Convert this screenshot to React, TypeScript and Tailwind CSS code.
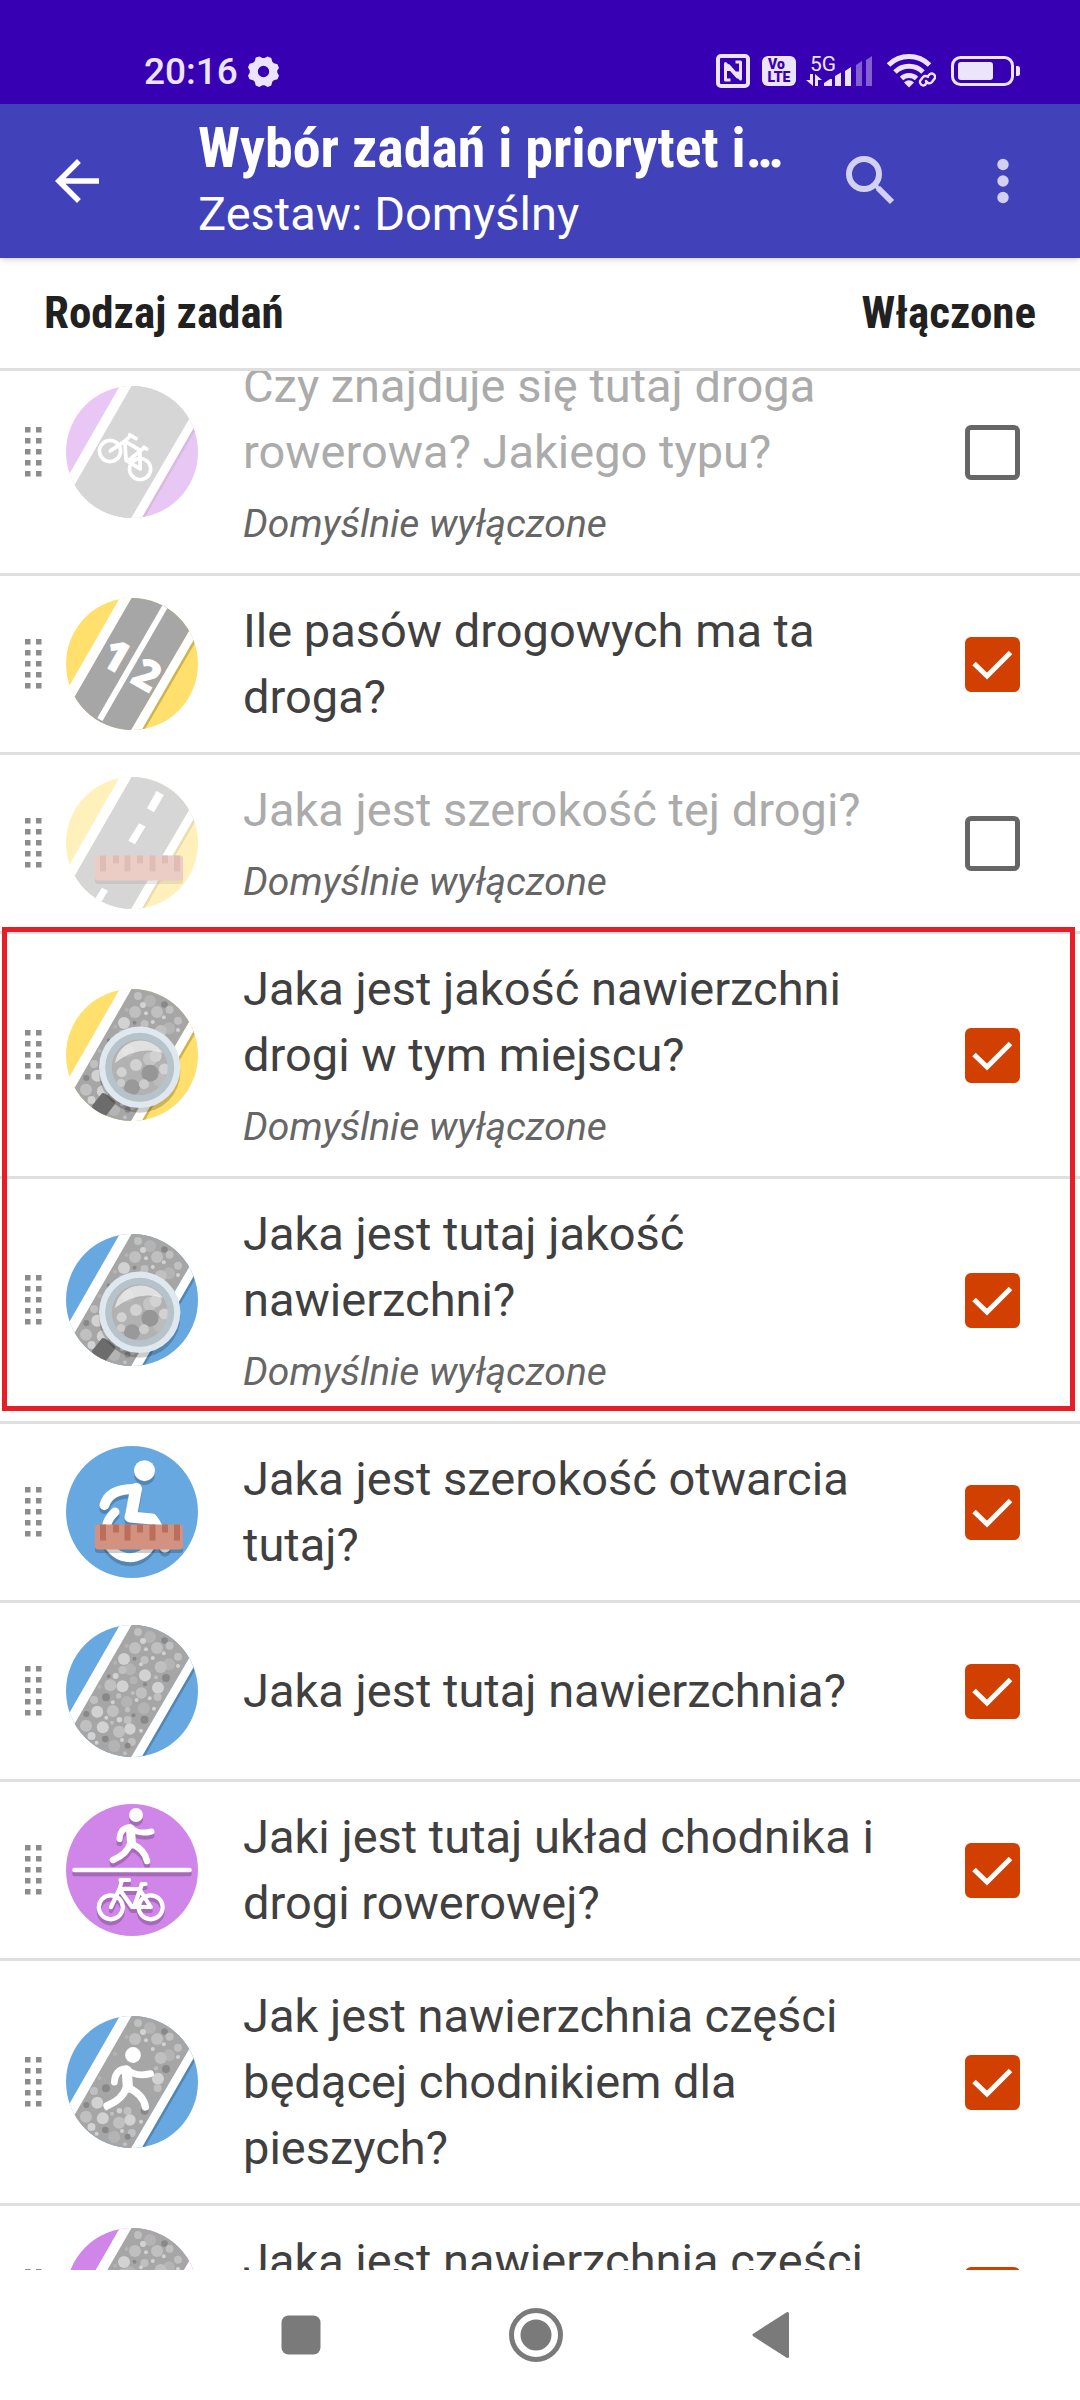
import React, { useId, useState } from "react";

const YELLOW = "#ffe06d";
const BLUE = "#68a8e0";
const PURPLE = "#d085e8";

const L = "#d2d2d2";
const M = "#c0c0c0";
const S = "#b4b4b4";
const D = "#888888";

type Dot = [number, number, number, string];

const PEBBLES: Dot[] = [
  [72, 7, 4, M], [84, 12, 6, S], [77, 16, 3, L], [98.5, 15.5, 3.3, D], [69, 23, 6, M], [60.6, 21, 2, S],
  [91, 23, 6, M], [103.6, 20.7, 4, M], [80, 24.3, 2, L], [97.8, 28.3, 2, L], [112, 31.7, 4, M], [86.8, 33, 2, L],
  [58, 34, 6, L], [68.5, 33.7, 2, D], [78.5, 35, 4, M], [75, 39.3, 2, L], [49, 37.7, 2, S], [103, 39.3, 6, S],
  [94.7, 42, 6, M], [112, 41, 2, L], [64, 44.3, 6, S], [56.5, 45, 4, M], [79, 50.3, 6, L], [49.6, 51, 3, L],
  [42.7, 51.3, 2, D], [100, 53, 4, D], [90, 52.3, 2, M], [67.5, 55.3, 4, S], [79, 59.3, 2, D], [44.4, 60.3, 6, M],
  [56.5, 61.3, 6, L], [33.5, 62, 2, S], [92, 62.7, 6, L], [75.4, 68, 5.7, M], [66.8, 68, 2, M], [91.6, 72, 4, M],
  [40, 72.3, 4, D], [52.7, 71, 2.7, M], [28, 75, 4, M], [46.8, 77.3, 2, L], [70.6, 75, 2, L], [83.7, 73.3, 2, L],
  [60.6, 76.7, 5.7, S], [77.8, 83.3, 6, S], [88, 83.7, 2, L], [31.3, 86.7, 6, L], [46.8, 86, 6, M], [61.6, 84.7, 2.7, M],
  [20.3, 89, 3, D], [40.3, 92.7, 2, L], [53.4, 94.7, 2.7, L], [67.5, 90.3, 2, D], [61.6, 95, 4, M], [78.5, 94.7, 4, D],
  [36.8, 102.3, 6, L], [20, 100.7, 6, M], [46, 97.7, 2, M], [53, 106.7, 6, M], [64, 104, 5.7, L], [75, 105.7, 2, L],
  [25.5, 111, 4, L], [39.3, 114, 3.3, D], [30.6, 117.7, 2, L], [48.2, 121, 6, S], [56, 115, 2, L], [65.8, 117, 4, M],
  [61.6, 120.7, 3, D], [59, 128.3, 2, M],
];

const LENS: Dot[] = [
  [84, 70, 7, "#c4c4c4"], [94, 91, 7, "#bcbcbc"], [62, 62, 6, "#bcbcbc"], [70, 76, 6, L], [84, 84.3, 8.5, "#969696"],
  [66, 98.3, 8, "#999999"], [78, 95.3, 5, "#cccccc"], [55.7, 83.3, 5, L], [89.7, 67, 6, L], [98.5, 80, 5.5, L], [55, 94, 4, "#cccccc"],
];

function Pebbles({ clearing = false }: { clearing?: boolean }) {
  const dots = clearing
    ? PEBBLES.filter(([x, y]) => !(x > 42 && x < 90 && y > 38 && y < 92) && !(x > 55 && x < 80 && y > 28 && y < 50))
    : PEBBLES;
  return (
    <g>
      {dots.map(([cx, cy, r, fill], i) => (
        <circle key={i} cx={cx} cy={cy} r={r} fill={fill} />
      ))}
    </g>
  );
}

function Disc({ color, road = false, faded = false, children }: { color: string; road?: boolean; faded?: boolean; children?: React.ReactNode }) {
  const id = useId();
  return (
    <svg viewBox="0 0 132 132" className={faded ? "size-[132px] shrink-0 opacity-45" : "size-[132px] shrink-0"} aria-hidden="true">
      <clipPath id={id}>
        <circle cx="66" cy="66" r="66" />
      </clipPath>
      <g clipPath={`url(#${id})`}>
        <rect width="132" height="132" fill={color} />
        {road && (
          <>
            <path d="M142 5L155 0L78.500 132H66z" fill="#000" opacity=".2" />
            <path d="M65 0H142.500L65.200 132H-11z" fill="#a6a6a6" />
            <path d="M53.800 0H65.500L-10.500 132H-22z M142.500 0H152L75.700 132H65.200z" fill="#fff" />
          </>
        )}
        {children}
      </g>
    </svg>
  );
}

const bikePath =
  "M54.500 76H63M56 76L53.500 85L45 103M54 85H74M54 86L66 103H84.700M75.500 80H79.500M76 80L68 103M74 86L84.700 103";

function Bike() {
  return (
    <g fill="none" stroke="currentColor" strokeWidth="4.200" strokeLinecap="round" strokeLinejoin="round">
      <circle cx="44.800" cy="103.300" r="12" />
      <circle cx="84.700" cy="103.300" r="12" />
      <path d={bikePath} />
    </g>
  );
}

function Walker() {
  return (
    <g fill="none" stroke="currentColor" strokeLinecap="round" strokeLinejoin="round">
      <circle cx="70" cy="11" r="7" fill="currentColor" stroke="none" />
      <path d="M53.500 35Q54 24 64 23Q72 31 85.500 27.500" strokeWidth="6" />
      <path d="M64.500 25L65.500 40" strokeWidth="9" />
      <path d="M64 40Q61 50 47 56M66 40Q79 46 81 57" strokeWidth="6.500" />
    </g>
  );
}

function Ruler() {
  return (
    <g>
      <rect x="29" y="82" width="88" height="25" rx="3" fill="#000" opacity=".2" />
      <rect x="29" y="78.500" width="88" height="25" rx="3" fill="#d3917f" />
      <path d="M34 78.500h6v16h-6zM47 78.500h6v8h-6zM58.500 78.500h6v16h-6zM71 78.500h6v8h-6zM83.500 78.500h6v16h-6zM96 78.500h6v8h-6zM108 78.500h6v16h-6z" fill="#b96f5b" />
    </g>
  );
}

function Magnifier() {
  return (
    <g>
      <rect x="29" y="106" width="17" height="20" rx="3" transform="rotate(38 37.500 116)" fill="#6c6c6c" />
      <circle cx="73.700" cy="83" r="40.700" fill="#000" opacity=".2" />
      <circle cx="73.700" cy="78.300" r="40.700" fill="#dfe8ee" />
      <circle cx="73.700" cy="78.300" r="34.500" fill="#b7c3ca" />
      <circle cx="73.700" cy="78.300" r="28" fill="#b2b2b2" />
      {LENS.map(([cx, cy, r, fill], i) => (
        <circle key={i} cx={cx} cy={cy} r={r} fill={fill} />
      ))}
      <circle cx="73.700" cy="78.300" r="31" fill="none" stroke="#b7c3ca" strokeWidth="6" />
      <path d="M49 74A26 26 0 0 1 97 64Q72 56 49 74z" fill="#fff" opacity=".6" />
    </g>
  );
}

function WheelchairFigure() {
  return (
    <g fill="none" stroke="currentColor" strokeLinecap="round" strokeLinejoin="round">
      <circle cx="78.500" cy="24.700" r="10.500" fill="currentColor" stroke="none" />
      <path d="M38.500 59Q43 43 68 43" strokeWidth="10" />
      <path d="M70 43L65 70" strokeWidth="12" />
      <path d="M64 71L86 73Q92 80 99 101" strokeWidth="11" />
      <path d="M49 66Q38 76 40 90A24 24 0 0 0 86 97" strokeWidth="9" />
    </g>
  );
}

function Raised({ by = 4, children }: { by?: number; children: React.ReactNode }) {
  return (
    <>
      <g transform={`translate(0 ${by})`} className="text-black" opacity=".2">{children}</g>
      <g className="text-white">{children}</g>
    </>
  );
}

function DragHandle() {
  return (
    <svg viewBox="0 0 17 50" className="h-[50px] w-[17px] shrink-0" fill="#8c8c8c" aria-hidden="true">
      {[0, 11, 22, 33, 44].map((y) => (
        <g key={y}>
          <rect x="0" y={y} width="5.500" height="5.500" />
          <rect x="11" y={y} width="5.500" height="5.500" />
        </g>
      ))}
    </svg>
  );
}

function QuestRow({ icon, title, off = false, on = false }: { icon: React.ReactNode; title: string; off?: boolean; on?: boolean }) {
  const id = useId();
  const [checked, setChecked] = useState(on);
  return (
    <li className="flex shrink-0 items-center border-b-3 border-[#dfdfdf] py-[22px] pr-[60px] pl-[25px]">
      <DragHandle />
      <div className="ml-6 shrink-0">{icon}</div>
      <div className="ml-[45px] min-w-0 flex-1">
        <label htmlFor={id} className={checked ? "block text-[47px] leading-[66px] text-[#404040]" : "block text-[47px] leading-[66px] text-[#ababab]"}>
          {title}
        </label>
        {off && <p className="pt-3 text-[39px] leading-[54px] text-[#666666] italic">Domyślnie wyłączone</p>}
      </div>
      <span className="ml-[60px] grid size-[55px] shrink-0">
        <input
          id={id}
          type="checkbox"
          checked={checked}
          onChange={(e) => setChecked(e.target.checked)}
          className="peer col-start-1 row-start-1 size-[55px] appearance-none rounded-md border-5 border-[#666666] bg-white checked:border-[#d14000] checked:bg-[#d14000]"
        />
        <svg viewBox="0 0 55 55" className="pointer-events-none col-start-1 row-start-1 hidden size-[55px] peer-checked:block" fill="none" stroke="#fff" strokeWidth="5" aria-hidden="true">
          <path d="M9 26.500L22 39L45.500 15.500" />
        </svg>
      </span>
    </li>
  );
}

function StatusBar() {
  return (
    <div className="flex h-[104px] shrink-0 items-center bg-[#3800b3] pt-[38px] pr-[59px] pl-[144px] text-[#ece4fb]">
      <span className="text-[37px] leading-none font-medium">20:16</span>
      <svg viewBox="0 0 30 30" className="ml-2.5 size-[31px]" fill="currentColor" aria-hidden="true">
        <path
          fillRule="evenodd"
          d="M11 0.500L14 2h2L19 0.500L22.500 2L23.500 5.500L25 7L28.500 8L30 11.500L28.300 14v2L30 19L28.500 22.500L25 23.500L23.500 25L22.500 28.500L19 30L16 28.300H14L11 30L7.500 28.500L6.500 25L5 23.500L1.500 22.500L0 19L1.700 16V14L0 11L1.500 7.500L5 6.500L6.500 5L7.500 1.500zM15 9.500A5.500 5.500 0 1 0 15 20.500A5.500 5.500 0 1 0 15 9.500z"
        />
      </svg>
      <div className="ml-auto flex items-center">
        <svg viewBox="0 0 34 34" className="size-[34px]" fill="none" stroke="currentColor" aria-hidden="true">
          <rect x="2" y="2" width="30" height="30" rx="3" strokeWidth="4" />
          <path d="M14.500 26H9.500V9.500L21.500 23V17.500M19.500 8h5V25L12.500 11.500V17" strokeWidth="3" strokeLinejoin="round" />
        </svg>
        <div className="ml-3 flex h-[30px] w-[34px] flex-col items-center justify-center rounded-md bg-[#ece4fb] text-[14px] leading-[13px] font-black text-[#3800b3]">
          <span className="self-start pl-1.5">Vo</span>
          <span>LTE</span>
        </div>
        <div className="ml-2.5 flex w-4 flex-col">
          <span className="pl-1 text-[21px] leading-[18px] whitespace-nowrap">5G</span>
          <svg viewBox="0 0 16 14" className="h-3.5 w-4" fill="currentColor" aria-hidden="true">
            <path d="M4 1h3v12L0 7h4zM9 1l7 6h-4v6H9z" />
          </svg>
        </div>
        <svg viewBox="0 0 50 32" className="ml-0.5 h-8 w-[50px]" fill="currentColor" aria-hidden="true">
          <path d="M0 31V28L6 24H8V31zM11 31V21L17 17.500V31zM21 31V16L27 12V31z" />
          <path d="M32 31V10L38 6V31zM42 31V5L48 1V31z" opacity=".42" />
        </svg>
        <svg viewBox="0 0 50 36" className="ml-3 h-9 w-[50px]" fill="none" stroke="currentColor" aria-hidden="true">
          <path d="M2.500 12A29 29 0 0 1 43.500 12" strokeWidth="5" />
          <path d="M9 19A20 20 0 0 1 37 19" strokeWidth="5" />
          <path d="M15.500 25.500A11 11 0 0 1 30.500 25.500" strokeWidth="5" />
          <path d="M18 29.500Q23 25 28 29.500L23 34.500z" fill="currentColor" stroke="none" />
          <g strokeWidth="2.400" strokeLinecap="round">
            <path d="M41 29l-2 3a3.500 3.500 0 0 1-5-4l3-4a3.500 3.500 0 0 1 5 0" />
            <path d="M42 23l2-2a3.500 3.500 0 0 1 5 4l-3 4a3.500 3.500 0 0 1-6-1" />
          </g>
        </svg>
        <svg viewBox="0 0 70 30" className="ml-[15px] h-[30px] w-[70px]" fill="currentColor" aria-hidden="true">
          <rect x="1.500" y="1.500" width="60" height="27" rx="8" fill="none" stroke="currentColor" strokeWidth="3" />
          <rect x="7" y="6" width="35" height="18" rx="3" />
          <path d="M65 10h1.500q2.500 0 2.500 2.500v5q0 2.500-2.500 2.500H65z" />
        </svg>
      </div>
    </div>
  );
}

export default function App() {
  return (
    <div className="flex h-screen flex-col overflow-hidden bg-white font-['Roboto',sans-serif]">
      <StatusBar />
      <header className="relative z-10 flex shrink-0 items-center bg-[#4141b9] py-[11px] pr-11 pl-11 text-white shadow-md">
        <button type="button" aria-label="Wstecz" className="size-[66px] shrink-0">
          <svg viewBox="0 0 24 24" className="size-[66px]" fill="currentColor" aria-hidden="true">
            <path d="M20 11H7.830l5.590-5.590L12 4l-8 8 8 8 1.410-1.410L7.830 13H20z" />
          </svg>
        </button>
        <div className="ml-[88px] w-[600px] min-w-0 shrink">
          <h1 className="truncate font-['Roboto_Condensed','Liberation_Sans_Narrow',Roboto,sans-serif] text-[56px] leading-[66px] font-bold">
            Wybór zadań i priorytet ich wyświetlania
          </h1>
          <p className="text-[47px] leading-[66px]">Zestaw: Domyślny</p>
        </div>
        <button type="button" aria-label="Szukaj" className="ml-auto size-[66px] shrink-0">
          <svg viewBox="0 0 66 66" className="size-[66px]" fill="none" stroke="#d2d0f3" strokeWidth="6" aria-hidden="true">
            <circle cx="27" cy="26" r="15" />
            <path d="M38.500 37.500L42 41" strokeWidth="4" />
            <path d="M41 40L55 54" />
          </svg>
        </button>
        <button type="button" aria-label="Więcej opcji" className="ml-[67px] size-[66px] shrink-0">
          <svg viewBox="0 0 66 66" className="size-[66px]" fill="#d2d0f3" aria-hidden="true">
            <circle cx="33" cy="16.500" r="5.700" />
            <circle cx="33" cy="33" r="5.700" />
            <circle cx="33" cy="49.500" r="5.700" />
          </svg>
        </button>
      </header>

      <div className="flex shrink-0 items-center justify-between border-b-3 border-[#dfdfdf] px-11 py-[22px] font-['Roboto_Condensed','Liberation_Sans_Narrow',Roboto,sans-serif] text-[45px] leading-[66px] font-bold text-[#212121]">
        <span>Rodzaj zadań</span>
        <span>Włączone</span>
      </div>

      <main className="min-h-0 flex-1 overflow-hidden">
        <ul className="-mt-10 flex flex-col">
          <QuestRow
            title="Czy znajduje się tutaj droga rowerowa? Jakiego typu?"
            off
            icon={
              <Disc color={PURPLE} road faded>
                <g className="text-white" transform="translate(44 65) rotate(31) scale(.88) translate(-44.8 -103.3)">
                  <Bike />
                </g>
              </Disc>
            }
          />
          <QuestRow
            title="Ile pasów drogowych ma ta droga?"
            on
            icon={
              <Disc color={YELLOW} road>
                <path d="M96.400 7.300L101.600 9.700L36.500 123L31.300 120z" fill="#fff" />
                <g fill="#fff" className="font-['Open_Sans',sans-serif] text-[43px] font-extrabold" textAnchor="middle">
                  <text x="0" y="15" transform="translate(50 58) rotate(30)">1</text>
                  <text x="0" y="15" transform="translate(81 77) rotate(30)">2</text>
                </g>
              </Disc>
            }
          />
          <QuestRow
            title="Jaka jest szerokość tej drogi?"
            off
            icon={
              <Disc color={YELLOW} road faded>
                <path d="M90.500 14L97.800 18L88 35.300L81 31.300zM73 46.300L79.500 49.500L69 67.300L62.300 63.700zM36 110.700L42 113.700L33 129L27 125z" fill="#fff" />
                <Ruler />
              </Disc>
            }
          />
          <li className="relative">
            <ul>
              <QuestRow
                title="Jaka jest jakość nawierzchni drogi w tym miejscu?"
                off
                on
                icon={<Disc color={YELLOW} road><Pebbles /><Magnifier /></Disc>}
              />
              <QuestRow
                title="Jaka jest tutaj jakość nawierzchni?"
                off
                on
                icon={<Disc color={BLUE} road><Pebbles /><Magnifier /></Disc>}
              />
            </ul>
            <div className="pointer-events-none absolute -top-[7px] right-[5px] bottom-[13px] left-0.5 border-5 border-[#e81e26]" />
          </li>
          <QuestRow
            title="Jaka jest szerokość otwarcia tutaj?"
            on
            icon={
              <Disc color={BLUE}>
                <Raised><WheelchairFigure /></Raised>
                <Ruler />
              </Disc>
            }
          />
          <QuestRow title="Jaka jest tutaj nawierzchnia?" on icon={<Disc color={BLUE} road><Pebbles /></Disc>} />
          <QuestRow
            title="Jaki jest tutaj układ chodnika i drogi rowerowej?"
            on
            icon={
              <Disc color={PURPLE}>
                <Raised>
                  <Walker />
                  <path d="M8.500 66H123.500" stroke="currentColor" strokeWidth="4.500" strokeLinecap="round" />
                  <Bike />
                </Raised>
              </Disc>
            }
          />
          <QuestRow
            title="Jak jest nawierzchnia części będącej chodnikiem dla pieszych?"
            on
            icon={
              <Disc color={BLUE} road>
                <Pebbles clearing />
                <g className="text-white" transform="translate(67 39) scale(1.13) translate(-70 -11)">
                  <Walker />
                </g>
              </Disc>
            }
          />
          <QuestRow
            title="Jaka jest nawierzchnia części będącej drogą rowerową?"
            on
            icon={<Disc color={PURPLE} road><Pebbles /></Disc>}
          />
        </ul>
      </main>

      <nav className="relative flex h-[130px] shrink-0 items-center justify-center gap-[181px] bg-white pr-2 text-[#7a7a7a]">
        <button type="button" aria-label="Ostatnie aplikacje" className="size-[54px]">
          <svg viewBox="0 0 54 54" className="size-[54px]" fill="currentColor" aria-hidden="true">
            <rect x="7.500" y="7.500" width="39" height="39" rx="7" />
          </svg>
        </button>
        <button type="button" aria-label="Ekran główny" className="size-[54px]">
          <svg viewBox="0 0 54 54" className="size-[54px]" fill="currentColor" aria-hidden="true">
            <circle cx="27" cy="27" r="24.500" fill="none" stroke="currentColor" strokeWidth="5" />
            <circle cx="27" cy="27" r="15.500" />
          </svg>
        </button>
        <button type="button" aria-label="Cofnij" className="size-[54px]">
          <svg viewBox="0 0 54 54" className="size-[54px]" fill="currentColor" stroke="currentColor" strokeWidth="3" strokeLinejoin="round" aria-hidden="true">
            <path d="M10 27L43.500 5.500V48.500z" />
          </svg>
        </button>
      </nav>
    </div>
  );
}
